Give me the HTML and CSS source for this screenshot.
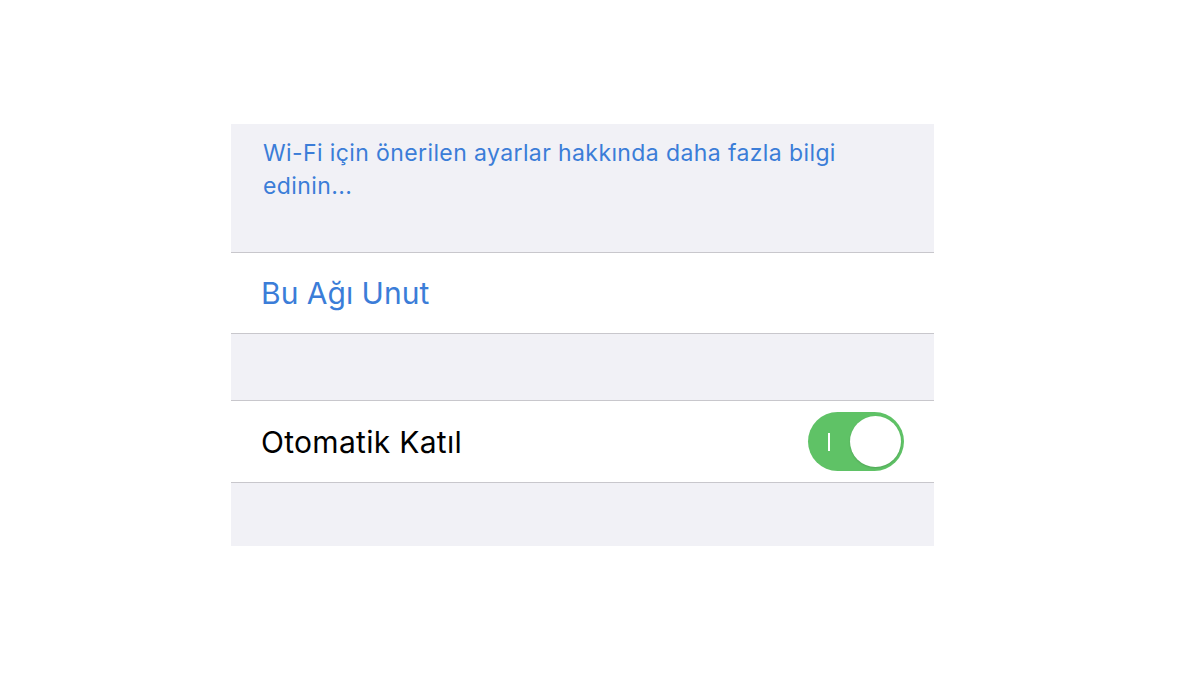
FILE: index.html
```html
<!DOCTYPE html>
<html>
<head>
    <title>Wi-Fi</title>
    <meta name="viewport" content="width=device-width, initial-scale=1">
    <link rel="stylesheet" href="styles.css">
</head>
<body>

  <div class="settings">
    <div class="group-footer">
      <a href="#">Wi-Fi için önerilen ayarlar hakkında daha fazla bilgi edinin...</a>
    </div>

    <div class="cell">
      <span class="cell-action">Bu Ağı Unut</span>
    </div>

    <div class="spacer"></div>

    <div class="cell tall">
      <span class="cell-label">Otomatik Katıl</span>
      <!-- switch is on: knob sits to the right -->
      <div class="switch on">
        <span class="switch-mark"></span>
        <span class="switch-knob"></span>
      </div>
    </div>

    <div class="spacer bottom"></div>
  </div>

</body>
</html>
```

FILE: styles.css
```css
html, body {
  padding: 0;
  margin: 0;
  background: white;
  font-family: Inter, "Noto Sans", sans-serif;
}

.settings {
  width: 703px;
  margin: 124px 0 0 231px;
  background-color: #f1f1f6;
}

.group-footer {
  padding: 13px 50px 38px 32px;
  height: 77px;
  border-bottom: 1px solid #c8c7cc;
}
.group-footer a {
  color: #3b7dd8;
  text-decoration: none;
  font-size: 23px;
  line-height: 33px;
  letter-spacing: 0.017em;
}

.cell {
  height: 80px;
  background: white;
  display: flex;
  align-items: center;
  justify-content: space-between;
  padding: 0 30px;
  border-bottom: 1px solid #c8c7cc;
}
.cell.tall {
  height: 81px;
}
.cell-action {
  color: #3b7dd8;
  font-size: 30px;
}
.cell-label {
  color: black;
  font-size: 30px;
  letter-spacing: 0.01em;
}

.spacer {
  height: 66px;
  border-bottom: 1px solid #c8c7cc;
}
.spacer.bottom {
  height: 63px;
  border-bottom: none;
}

.switch {
  width: 96px;
  height: 59px;
  border-radius: 30px;
  background-color: #5fc266;
  display: flex;
  align-items: center;
  justify-content: space-between;
  padding: 0 3px 0 20px;
  box-sizing: border-box;
}
.switch-mark {
  width: 2px;
  height: 18px;
  background: white;
}
.switch-knob {
  width: 51px;
  height: 51px;
  border-radius: 50%;
  background: white;
  box-shadow: 0 1px 2px rgba(0, 0, 0, 0.15);
}
```
